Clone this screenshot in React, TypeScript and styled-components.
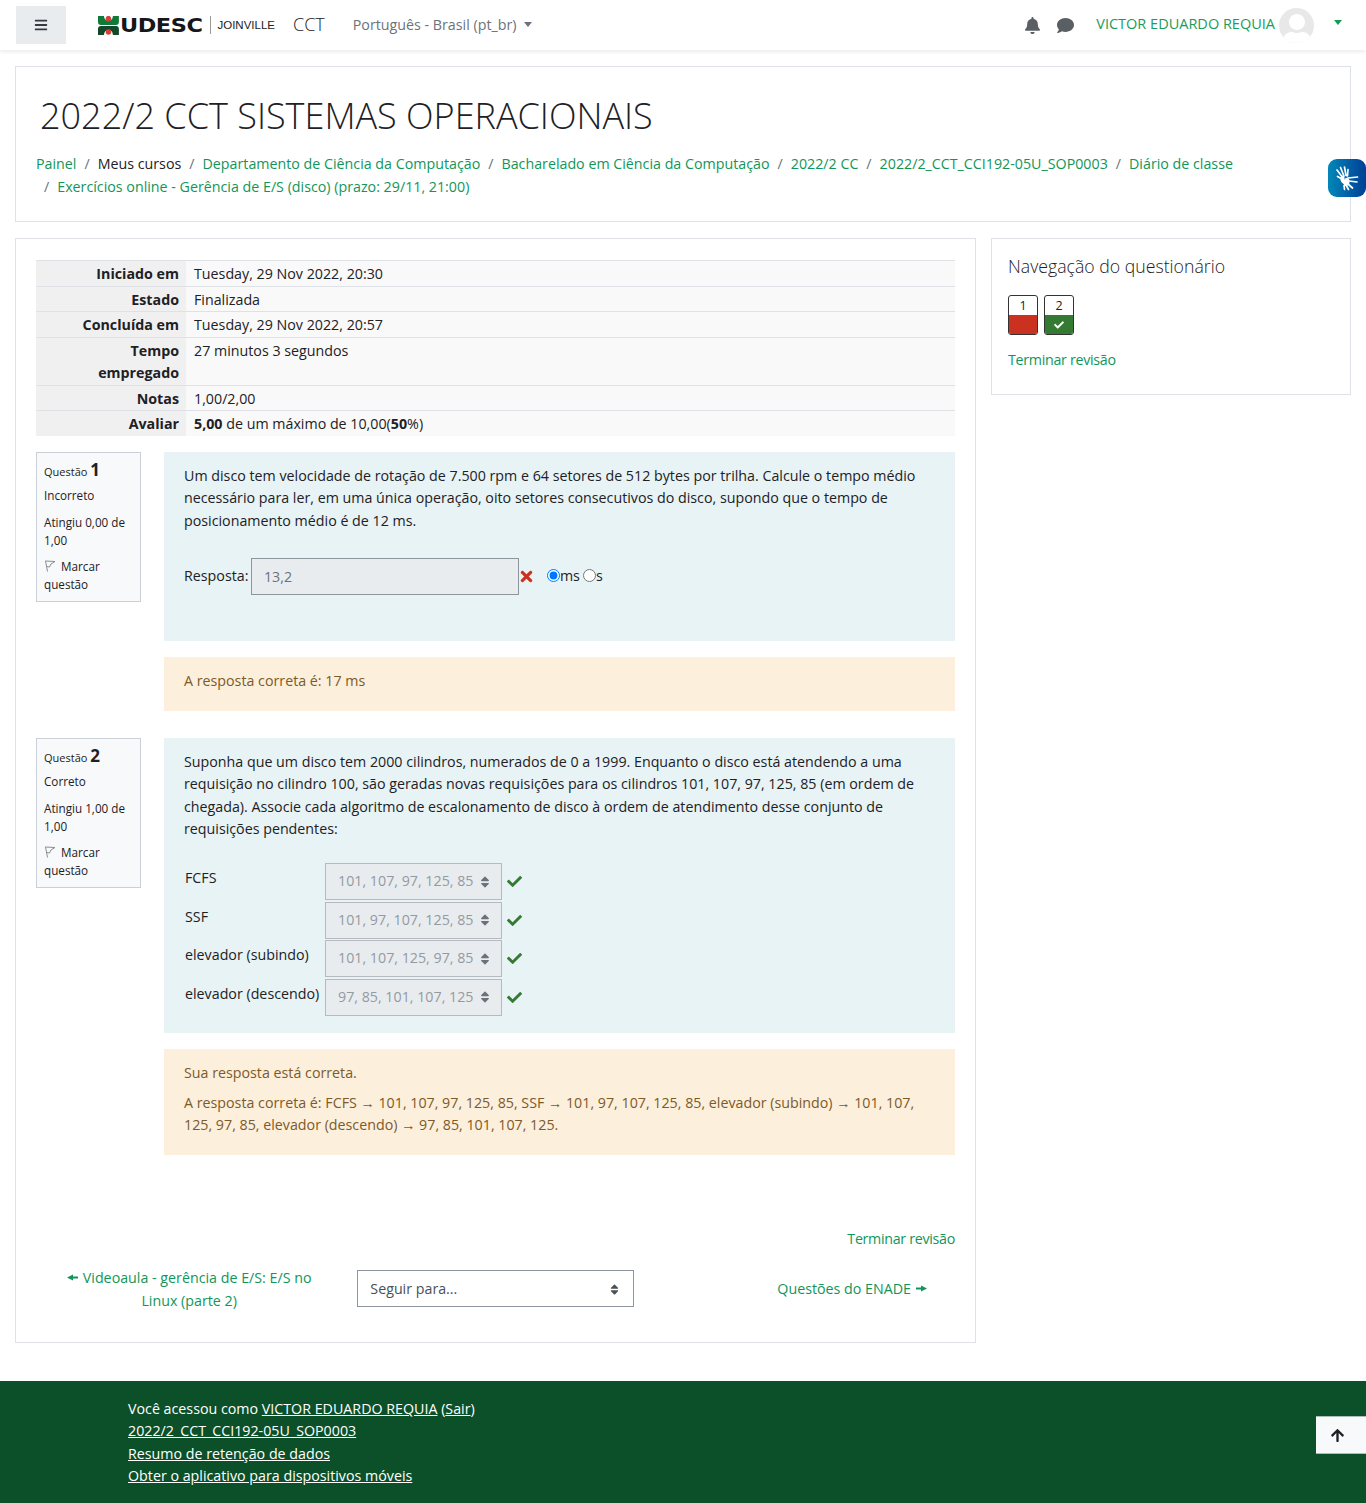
import styled, { createGlobalStyle } from "styled-components";
import {
  FaArrowUp,
  FaBars,
  FaBell,
  FaCheck,
  FaComment,
  FaSort,
  FaTimes,
  FaUser,
} from "react-icons/fa";

const summary = [
  { label: "Iniciado em", value: "Tuesday, 29 Nov 2022, 20:30" },
  { label: "Estado", value: "Finalizada" },
  { label: "Concluída em", value: "Tuesday, 29 Nov 2022, 20:57" },
  { label: "Tempo\nempregado", value: "27 minutos 3 segundos" },
  { label: "Notas", value: "1,00/2,00" },
];

const matches = [
  { label: "FCFS", value: "101, 107, 97, 125, 85" },
  { label: "SSF", value: "101, 97, 107, 125, 85" },
  { label: "elevador (subindo)", value: "101, 107, 125, 97, 85" },
  { label: "elevador (descendo)", value: "97, 85, 101, 107, 125" },
];

const crumbs = [
  { title: "Painel", link: true },
  { title: "Meus cursos", link: false },
  { title: "Departamento de Ciência da Computação", link: true },
  { title: "Bacharelado em Ciência da Computação", link: true },
  { title: "2022/2 CC", link: true },
  { title: "2022/2_CCT_CCI192-05U_SOP0003", link: true },
  { title: "Diário de classe", link: true },
];

const QuestionInfo = ({
  number,
  state,
  grade,
}: {
  number: number;
  state: string;
  grade: string;
}) => (
  <InfoCard>
    <InfoTitle>
      Questão <InfoNumber>{number}</InfoNumber>
    </InfoTitle>
    <InfoLine>{state}</InfoLine>
    <InfoLine>{grade}</InfoLine>
    <InfoLine>
      <FlagIcon viewBox="0 0 12 12">
        <path d="M1.5 .8 L3.5 11.5 M1.5 1 L11 1.5 L7 4 L5.5 7 L2.5 6.5" fill="none" stroke="#8a8f94" strokeWidth="1" />
      </FlagIcon>
      Marcar questão
    </InfoLine>
  </InfoCard>
);

export default function App() {
  return (
    <>
      <GlobalStyle />
      <Navbar>
        <MenuButton>
          <FaBars size={14} />
        </MenuButton>
        <Logo>
          <svg width="21" height="19" viewBox="0 0 21 19">
            <path d="M0 0h6c0 3 2 5 4.5 5s4.5-2 4.5-5h6v6c0 2-1 3-3 3H3c-2 0-3-1-3-3z" fill="#0f7a3a" />
            <path d="M3 10h15c2 0 3 1 3 3v6h-6c0-3-2-5-4.5-5S6 16 6 19H0v-6c0-2 1-3 3-3z" fill="#14472a" />
            <circle cx="10.5" cy="2.6" r="2.8" fill="#d9403a" />
            <circle cx="10.5" cy="16" r="2.8" fill="#d9403a" />
          </svg>
          <LogoName>UDESC</LogoName>
          <LogoDivider />
          <LogoCampus>JOINVILLE</LogoCampus>
        </Logo>
        <Brand>CCT</Brand>
        <Language>
          Português - Brasil (pt_br)
          <Caret />
        </Language>
        <NavRight>
          <NavIcons>
            <FaBell size={17} />
            <FaComment size={17} />
          </NavIcons>
          <UserName>VICTOR EDUARDO REQUIA</UserName>
          <Avatar>
            <AvatarFigure>
              <FaUser size={32} />
            </AvatarFigure>
          </Avatar>
          <UserCaret />
        </NavRight>
      </Navbar>

      <Page>
        <PageHeader>
          <PageTitle>2022/2 CCT SISTEMAS OPERACIONAIS</PageTitle>
          <CrumbRow>
            {crumbs.map((crumb, i) => (
              <span key={crumb.title}>
                {i > 0 && <CrumbSeparator>/</CrumbSeparator>}
                {crumb.link ? <Link>{crumb.title}</Link> : crumb.title}
              </span>
            ))}
          </CrumbRow>
          <CrumbRow>
            <CrumbSeparator>/</CrumbSeparator>
            <Link>Exercícios online - Gerência de E/S (disco) (prazo: 29/11, 21:00)</Link>
          </CrumbRow>
        </PageHeader>

        <Columns>
          <Main>
            <SummaryTable>
              <tbody>
                {summary.map((row) => (
                  <tr key={row.label}>
                    <SummaryHead>{row.label}</SummaryHead>
                    <SummaryCell>{row.value}</SummaryCell>
                  </tr>
                ))}
                <tr>
                  <SummaryHead>Avaliar</SummaryHead>
                  <SummaryCell>
                    <b>5,00</b> de um máximo de 10,00(<b>50</b>%)
                  </SummaryCell>
                </tr>
              </tbody>
            </SummaryTable>

            <Question>
              <QuestionInfo number={1} state="Incorreto" grade="Atingiu 0,00 de 1,00" />
              <QuestionBody>
                <Formulation $bottom={46}>
                  <QuestionText>
                    Um disco tem velocidade de rotação de 7.500 rpm e 64 setores de 512 bytes por trilha. Calcule o
                    tempo médio necessário para ler, em uma única operação, oito setores consecutivos do disco, supondo
                    que o tempo de posicionamento médio é de 12 ms.
                  </QuestionText>
                  <AnswerRow>
                    Resposta:
                    <AnswerInput readOnly value="13,2" />
                    <WrongMark>
                      <FaTimes size={17} />
                    </WrongMark>
                    <UnitRadio type="radio" name="unit" defaultChecked $first />
                    ms
                    <UnitRadio type="radio" name="unit" />s
                  </AnswerRow>
                </Formulation>
                <Feedback>
                  <FeedbackLine>A resposta correta é: 17 ms</FeedbackLine>
                </Feedback>
              </QuestionBody>
            </Question>

            <Question>
              <QuestionInfo number={2} state="Correto" grade="Atingiu 1,00 de 1,00" />
              <QuestionBody>
                <Formulation $bottom={17}>
                  <QuestionText>
                    Suponha que um disco tem 2000 cilindros, numerados de 0 a 1999. Enquanto o disco está atendendo a
                    uma requisição no cilindro 100, são geradas novas requisições para os cilindros 101, 107, 97, 125,
                    85 (em ordem de chegada). Associe cada algoritmo de escalonamento de disco à ordem de atendimento
                    desse conjunto de requisições pendentes:
                  </QuestionText>
                  <MatchList>
                    {matches.map((match) => (
                      <MatchRow key={match.label}>
                        <MatchLabel>{match.label}</MatchLabel>
                        <SelectBox>
                          {match.value}
                          <SortIcon>
                            <FaSort size={14} />
                          </SortIcon>
                        </SelectBox>
                        <RightMark>
                          <FaCheck size={15} />
                        </RightMark>
                      </MatchRow>
                    ))}
                  </MatchList>
                </Formulation>
                <Feedback>
                  <FeedbackLine>Sua resposta está correta.</FeedbackLine>
                  <FeedbackLine $gap>
                    A resposta correta é: FCFS → 101, 107, 97, 125, 85, SSF → 101, 97, 107, 125, 85, elevador (subindo)
                    → 101, 107, 125, 97, 85, elevador (descendo) → 97, 85, 101, 107, 125.
                  </FeedbackLine>
                </Feedback>
              </QuestionBody>
            </Question>

            <FinishRow>
              <FinishLink>Terminar revisão</FinishLink>
            </FinishRow>

            <ActivityNav>
              <PrevLink>
                <Link>
                  <NavArrow viewBox="0 0 11 7" $side="right">
                    <path d="M0 3.5 L6 .5 V2.5 H11 V4.5 H6 V6.5 Z" fill="currentColor" />
                  </NavArrow>
                  Videoaula - gerência de E/S: E/S no Linux (parte 2)
                </Link>
              </PrevLink>
              <JumpCell>
                <JumpBox>
                  Seguir para...
                  <FaSort size={13} />
                </JumpBox>
              </JumpCell>
              <NextLink>
                <Link>
                  Questões do ENADE
                  <NavArrow viewBox="0 0 11 7" $side="left">
                    <path d="M11 3.5 L5 .5 V2.5 H0 V4.5 H5 V6.5 Z" fill="currentColor" />
                  </NavArrow>
                </Link>
              </NextLink>
            </ActivityNav>
          </Main>

          <Aside>
            <AsideTitle>Navegação do questionário</AsideTitle>
            <QuizButtons>
              <QuizButton>
                <QuizButtonNumber>1</QuizButtonNumber>
                <QuizButtonState $color="#ca3120" />
              </QuizButton>
              <QuizButton>
                <QuizButtonNumber>2</QuizButtonNumber>
                <QuizButtonState $color="#357a32">
                  <FaCheck size={10} />
                </QuizButtonState>
              </QuizButton>
            </QuizButtons>
            <FinishLink>Terminar revisão</FinishLink>
          </Aside>
        </Columns>
      </Page>

      <Footer>
        <FooterLine>
          Você acessou como <FooterLink>VICTOR EDUARDO REQUIA</FooterLink> (<FooterLink>Sair</FooterLink>)
        </FooterLine>
        <FooterLine>
          <FooterLink>2022/2_CCT_CCI192-05U_SOP0003</FooterLink>
        </FooterLine>
        <FooterLine>
          <FooterLink>Resumo de retenção de dados</FooterLink>
        </FooterLine>
        <FooterLine>
          <FooterLink>Obter o aplicativo para dispositivos móveis</FooterLink>
        </FooterLine>
        <BackToTop>
          <FaArrowUp size={15} />
        </BackToTop>
      </Footer>

      <SignWidget>
        {/* hand-talk mark: one spread hand over another */}
        <svg width="28" height="28" viewBox="0 0 28 28" fill="none" stroke="#fff" strokeLinecap="round">
          <path d="M10 14 L4 6 M11 12 L7.5 3.5 M13 11.5 L11.5 3 M14.5 12 L15 5.5 M9 15 L4.5 12.5" strokeWidth="1.7" />
          <path d="M9.5 13.5 Q9 17 12 18.5" stroke="#fff" strokeWidth="4" />
          <path d="M15 14 L24.5 13 M16 17 L24 18 M15 20 L19.5 24 M13 21 L15.5 25.5 M11 21.5 L11.5 25.5" strokeWidth="1.7" />
          <path d="M14 16 Q15 19 13 20" stroke="#fff" strokeWidth="4.5" />
        </svg>
      </SignWidget>
    </>
  );
}

const GlobalStyle = createGlobalStyle`
  html, body {
    margin: 0;
    padding: 0;
    background: #fff;
  }
  body {
    color: #1d2125;
    font-family: "Open Sans", "Noto Sans", sans-serif;
    font-size: 14.26px;
    line-height: 22.5px;
  }
  #root {
    position: relative;
  }
  * {
    box-sizing: border-box;
  }
`;

const Navbar = styled.nav`
  align-items: center;
  background: #fff;
  box-shadow: 0 2px 4px rgba(0, 0, 0, 0.08);
  display: flex;
  height: 50px;
  padding-left: 16px;
  position: relative;
`;

const MenuButton = styled.div`
  align-items: center;
  background: #e9ecef;
  color: #343a40;
  display: flex;
  height: 38px;
  justify-content: center;
  width: 50px;
`;

const Logo = styled.div`
  align-items: center;
  display: flex;
  margin-left: 32px;
  width: 177px;
`;

const LogoName = styled.span`
  color: #15171a;
  font-family: "DejaVu Sans", sans-serif;
  font-size: 19px;
  font-weight: 700;
  letter-spacing: -0.4px;
  line-height: 20px;
  margin-left: 1px;
  transform: scaleX(1.18);
  transform-origin: left center;
  width: 83px;
`;

const LogoDivider = styled.span`
  background: #9a9a9a;
  height: 18px;
  margin-left: 8px;
  width: 1px;
`;

const LogoCampus = styled.span`
  color: #222;
  font-family: "Liberation Sans", sans-serif;
  font-size: 11.5px;
  margin-left: 6px;
`;

const Brand = styled.span`
  color: #1d2125;
  font-size: 18px;
  font-weight: 300;
  margin: -2px 0 0 18px;
`;

const Language = styled.div`
  align-items: center;
  color: #6a737b;
  display: flex;
  margin: 1px 0 0 28px;
`;

const Caret = styled.span`
  border-left: 4.5px solid transparent;
  border-right: 4.5px solid transparent;
  border-top: 5px solid #6a737b;
  margin: -3px 0 0 8px;
`;

const NavRight = styled.div`
  align-items: center;
  display: flex;
  margin-left: auto;
  padding-right: 24px;
`;

const NavIcons = styled.div`
  align-items: center;
  color: #5a5f64;
  display: flex;
  gap: 16px;
  margin-right: 22px;
`;

const UserName = styled.a`
  color: #1a9c5b;
  font-size: 14.5px;
  margin-top: -2px;
`;

const Avatar = styled.div`
  background: #e8e8e8;
  border-radius: 50%;
  color: #fff;
  height: 35px;
  margin-left: 4px;
  overflow: hidden;
  width: 35px;
`;

const AvatarFigure = styled.div`
  display: flex;
  justify-content: center;
  padding-top: 6px;
`;

const UserCaret = styled.span`
  border-left: 4.5px solid transparent;
  border-right: 4.5px solid transparent;
  border-top: 5px solid #119a58;
  margin: -6px 0 0 20px;
`;

const Page = styled.div`
  padding: 16px 15px 38px;
`;

const PageHeader = styled.header`
  border: 1px solid #dee2e6;
  height: 156px;
  padding: 26px 20px 0;
`;

const PageTitle = styled.h1`
  color: #1d2125;
  font-size: 36px;
  font-weight: 300;
  line-height: 46px;
  margin: 0 0 13px 4px;
`;

const CrumbRow = styled.div`
  line-height: 23px;
  white-space: nowrap;
`;

const CrumbSeparator = styled.span`
  color: #6a737b;
  margin: 0 8px;
`;

const Link = styled.a`
  color: #11965a;
`;

const FinishLink = styled(Link)`
  letter-spacing: -0.3px;
`;

const Columns = styled.div`
  align-items: flex-start;
  display: grid;
  gap: 15px;
  grid-template-columns: 961px 360px;
  margin-top: 16px;
`;

const Main = styled.main`
  border: 1px solid #dee2e6;
  height: 1105px;
  padding: 21px 20px 0;
`;

const SummaryTable = styled.table`
  border-collapse: collapse;
  margin-bottom: 16.5px;
  width: 100%;
`;

const SummaryHead = styled.th`
  background: #f0f0f0;
  border-top: 1px solid #dee2e6;
  font-weight: 700;
  padding: 2px 7px 0 0;
  text-align: right;
  vertical-align: top;
  white-space: pre-line;
  width: 150px;
`;

const SummaryCell = styled.td`
  background: #f9f9f9;
  border-top: 1px solid #dee2e6;
  padding: 2px 8px 0 8px;
  vertical-align: top;
`;

const Question = styled.section`
  align-items: flex-start;
  display: flex;
  gap: 23px;
  margin-bottom: 27px;
`;

const InfoCard = styled.div`
  background: #f8f9fa;
  border: 1px solid #cad0d7;
  flex: none;
  font-size: 11.7px;
  height: 150px;
  line-height: 18px;
  padding: 6px 7px 0;
  width: 105px;
`;

const InfoTitle = styled.h3`
  font-size: 11px;
  font-weight: 400;
  line-height: 22px;
  margin: 0 0 3px;
`;

const InfoNumber = styled.span`
  font-size: 17px;
  font-weight: 700;
`;

const InfoLine = styled.div`
  margin-bottom: 8.5px;
`;

const FlagIcon = styled.svg`
  height: 12px;
  margin-right: 5px;
  vertical-align: -1px;
  width: 12px;
`;

const QuestionBody = styled.div`
  flex: 1;
  min-width: 0;
`;

const Formulation = styled.div<{ $bottom: number }>`
  background: #e7f3f5;
  margin-bottom: 16px;
  padding: 12.5px 20px ${(p) => p.$bottom}px;
`;

const QuestionText = styled.p`
  margin: 0;
`;

const AnswerRow = styled.div`
  align-items: center;
  display: flex;
  margin-top: 26px;
`;

const AnswerInput = styled.input`
  background: #e9ecef;
  border: 1px solid #8f959e;
  color: #6a737b;
  font: inherit;
  height: 37px;
  margin-left: 2.5px;
  padding: 0 12px;
  width: 268px;
`;

const WrongMark = styled.span`
  color: #ca3120;
  display: flex;
  margin-left: -1px;
`;

const UnitRadio = styled.input<{ $first?: boolean }>`
  height: 13px;
  margin: 0 0 2px ${(p) => (p.$first ? "12px" : "3px")};
  width: 13px;
`;

const MatchList = styled.div`
  display: flex;
  flex-direction: column;
  gap: 1.5px;
  margin-top: 22.5px;
`;

const MatchRow = styled.div`
  align-items: center;
  display: flex;
  height: 37px;
`;

const MatchLabel = styled.span`
  align-self: flex-start;
  margin: 4px 0 0 1px;
  width: 140px;
`;

const SelectBox = styled.div`
  align-items: center;
  background: #e9ecef;
  border: 1px solid #b4bac0;
  color: #949aa2;
  display: flex;
  height: 37px;
  padding-left: 12px;
  position: relative;
  white-space: nowrap;
  width: 177px;
`;

const SortIcon = styled.span`
  color: #6a737b;
  display: flex;
  position: absolute;
  right: 9px;
`;

const RightMark = styled.span`
  color: #357a32;
  display: flex;
  margin-left: 5px;
`;

const Feedback = styled.div`
  background: #fcefdc;
  color: #7d5a29;
  padding: 13px 20px 18.5px;
`;

const FeedbackLine = styled.p<{ $gap?: boolean }>`
  margin: ${(p) => (p.$gap ? "7.5px" : "0")} 0 0;
`;

const FinishRow = styled.div`
  margin-top: 73px;
  text-align: right;
`;

const ActivityNav = styled.div`
  align-items: center;
  display: grid;
  grid-template-columns: repeat(3, 1fr);
  margin-top: 14px;
`;

const PrevLink = styled.div`
  padding: 1px 15px 0;
  text-align: center;
  line-height: 23px;
`;

const NavArrow = styled.svg<{ $side: "left" | "right" }>`
  height: 7px;
  margin-${(p) => p.$side}: 5px;
  vertical-align: 2px;
  width: 11px;
`;

const JumpCell = styled.div`
  padding: 0 15px;
`;

const JumpBox = styled.div`
  align-items: center;
  border: 1px solid #8f959e;
  color: #495057;
  display: flex;
  height: 37px;
  justify-content: space-between;
  padding: 2px 12px 0;
`;

const NextLink = styled.div`
  padding: 2px 28px 0 0;
  text-align: right;
`;

const Aside = styled.aside`
  border: 1px solid #dee2e6;
  height: 157px;
  padding: 14px 16px 0;
`;

const AsideTitle = styled.h4`
  color: #1d2125;
  font-size: 17.7px;
  font-weight: 300;
  line-height: 26px;
  margin: 0 0 16px;
`;

const QuizButtons = styled.div`
  display: flex;
  gap: 6px;
  margin-bottom: 14px;
`;

const QuizButton = styled.div`
  border: 1px solid #333;
  border-radius: 3px;
  height: 40px;
  overflow: hidden;
  width: 30px;
`;

const QuizButtonNumber = styled.div`
  font-size: 12.5px;
  height: 19px;
  line-height: 19px;
  text-align: center;
`;

const QuizButtonState = styled.div<{ $color: string }>`
  align-items: center;
  background: ${(p) => p.$color};
  color: #fff;
  display: flex;
  height: 20px;
  justify-content: center;
`;

const Footer = styled.footer`
  background: #0c502a;
  color: #fff;
  height: 122px;
  padding: 17px 128px 0;
  position: relative;
`;

const FooterLine = styled.div`
  line-height: 22.4px;
`;

const FooterLink = styled.a`
  text-decoration: underline;
`;

const BackToTop = styled.div`
  align-items: center;
  background: #f8f9fa;
  border-bottom: 1px solid #aebdb3;
  border-top: 1px solid #aebdb3;
  color: #1d2125;
  display: flex;
  height: 38px;
  justify-content: center;
  padding-right: 8px;
  position: absolute;
  right: 0;
  top: 35px;
  width: 50px;
`;

const SignWidget = styled.div`
  align-items: center;
  background: linear-gradient(90deg, #0287b9, #003f94);
  border-radius: 9px;
  color: #fff;
  display: flex;
  height: 38px;
  justify-content: center;
  position: absolute;
  right: 0;
  top: 159px;
  width: 38px;
`;
